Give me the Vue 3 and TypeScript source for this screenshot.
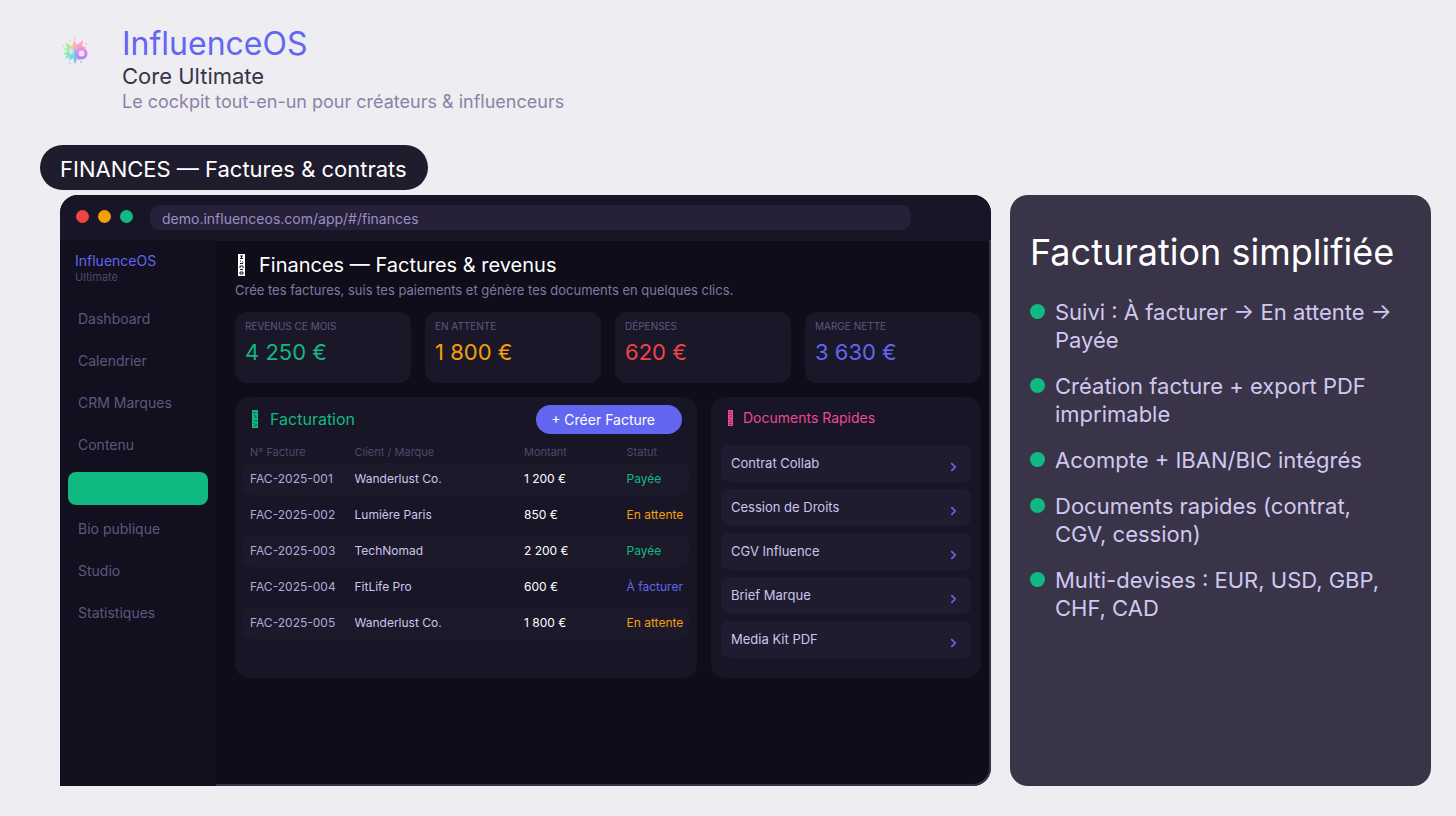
<script setup lang="ts">
interface Stat { label: string; value: string; tone: string }
interface Invoice { id: string; client: string; amount: string; status: string; tone: string }

const nav: string[] = ['Dashboard', 'Calendrier', 'CRM Marques', 'Contenu', 'Finances', 'Bio publique', 'Studio', 'Statistiques']
const active = 'Finances'

const stats: Stat[] = [
  { label: 'REVENUS CE MOIS', value: '4 250 €', tone: 'green' },
  { label: 'EN ATTENTE', value: '1 800 €', tone: 'amber' },
  { label: 'DÉPENSES', value: '620 €', tone: 'red' },
  { label: 'MARGE NETTE', value: '3 630 €', tone: 'indigo' },
]

const invoices: Invoice[] = [
  { id: 'FAC-2025-001', client: 'Wanderlust Co.', amount: '1 200 €', status: 'Payée', tone: 'green' },
  { id: 'FAC-2025-002', client: 'Lumière Paris', amount: '850 €', status: 'En attente', tone: 'amber' },
  { id: 'FAC-2025-003', client: 'TechNomad', amount: '2 200 €', status: 'Payée', tone: 'green' },
  { id: 'FAC-2025-004', client: 'FitLife Pro', amount: '600 €', status: 'À facturer', tone: 'indigo' },
  { id: 'FAC-2025-005', client: 'Wanderlust Co.', amount: '1 800 €', status: 'En attente', tone: 'amber' },
]

const documents: string[] = ['Contrat Collab', 'Cession de Droits', 'CGV Influence', 'Brief Marque', 'Media Kit PDF']

const features: string[] = [
  'Suivi : À facturer → En attente → Payée',
  'Création facture + export PDF imprimable',
  'Acompte + IBAN/BIC intégrés',
  'Documents rapides (contrat, CGV, cession)',
  'Multi-devises : EUR, USD, GBP, CHF, CAD',
]
</script>

<template>
  <div class="page">
    <header class="brand">
      <svg class="logo" viewBox="0 0 28 28" aria-hidden="true">
        <defs>
          <linearGradient id="petals" gradientUnits="userSpaceOnUse" x1="3" y1="4" x2="16" y2="26">
            <stop offset="0" stop-color="#e3f07f" />
            <stop offset="0.3" stop-color="#96f59a" />
            <stop offset="0.6" stop-color="#7be8cf" />
            <stop offset="1" stop-color="#8f9ff7" />
          </linearGradient>
          <linearGradient id="blush" x1="0" y1="0" x2="1" y2="0">
            <stop offset="0" stop-color="#f7c9a0" />
            <stop offset="0.5" stop-color="#fba3bd" />
            <stop offset="1" stop-color="#f39be6" />
          </linearGradient>
          <linearGradient id="ring" x1="0" y1="0" x2="0" y2="1">
            <stop offset="0" stop-color="#f08be6" />
            <stop offset="1" stop-color="#b184f8" />
          </linearGradient>
        </defs>
        <path fill="url(#petals)" d="M12 11 L9 8 L4 5 L6 11 L2 12 L7 14 L2 17 L6 18 L4 22 L9 20 L8 24 L12 21 L14 27 L16 22 L19 23 L17 19 L13 18 Z" />
        <path fill="url(#blush)" d="M9 12 L12 7 L13 3 L16 8 L22 3 L21 9 L26 11 L20 12 L14 14 Z" />
        <path fill="#eedff5" d="M9 11 L12 13 L11 17 L8 16 Z" />
        <path fill="#63cff5" d="M13 12 H15 V22 H13 Z" />
        <circle cx="20.500" cy="16.500" r="4.500" fill="#f1e4f7" stroke="url(#ring)" stroke-width="3" />
        <circle cx="14" cy="1.500" r="1" fill="#f5b9c9" />
        <circle cx="9" cy="4" r="1" fill="#f0dc92" />
        <circle cx="2" cy="9" r="1" fill="#cdee8b" />
        <circle cx="9" cy="26" r="1" fill="#9ae3e6" />
        <circle cx="20" cy="25" r="1" fill="#b7b2f5" />
        <circle cx="25" cy="7" r="1" fill="#f3aee0" />
      </svg>
      <div>
        <h1 class="brand-name">InfluenceOS</h1>
        <p class="brand-edition">Core Ultimate</p>
        <p class="brand-tagline">Le cockpit tout-en-un pour créateurs &amp; influenceurs</p>
      </div>
    </header>

    <div class="pill">FINANCES — Factures &amp; contrats</div>

    <div class="board">
      <section class="window" aria-label="Application">
        <div class="chrome">
          <span class="dot dot-red"></span>
          <span class="dot dot-amber"></span>
          <span class="dot dot-green"></span>
          <input class="url" type="text" aria-label="Adresse" value="demo.influenceos.com/app/#/finances" readonly />
        </div>
        <div class="body">
          <aside class="sidebar">
            <div class="side-name">InfluenceOS</div>
            <div class="side-edition">Ultimate</div>
            <nav class="nav">
              <a v-for="item in nav" :key="item" href="#" class="nav-item" :class="{ active: item === active }" :aria-label="item">
                <template v-if="item !== active">{{ item }}</template>
              </a>
            </nav>
          </aside>

          <main class="main">
            <h2 class="title">
              <svg class="glyph glyph-lg" viewBox="0 0 7 22" aria-hidden="true">
                <path fill="currentColor" d="M0 0H7V22H0Z" />
                <path class="glyph-ink" d="M2 2H5M3.500 2V4M2 4.500H5M2 7H3M4 8H5M2 9.500H5M2 12H5M2 12V14M5 12V14M2 15.500H5M2 18H5V20H2Z" />
              </svg>
              Finances — Factures &amp; revenus
            </h2>
            <p class="subtitle">Crée tes factures, suis tes paiements et génère tes documents en quelques clics.</p>

            <div class="stats">
              <div v-for="s in stats" :key="s.label" class="stat">
                <div class="stat-label">{{ s.label }}</div>
                <div class="stat-value" :class="s.tone">{{ s.value }}</div>
              </div>
            </div>

            <div class="panels">
              <section class="panel">
                <div class="billing-head">
                  <h3 class="billing-title green">
                    <svg class="glyph glyph-md" viewBox="0 0 6 18" aria-hidden="true">
                      <path fill="currentColor" d="M0 0H6V18H0Z" />
                      <path class="glyph-ink thin" d="M2 2V4M4 2V3M2 6H4M4 7V8M2 10V11M4 10V12M2 13V14M4 14V16M2 16H3" />
                    </svg>
                    Facturation
                  </h3>
                  <button class="create" type="button">+ Créer Facture</button>
                </div>
                <table class="table">
                  <colgroup><col class="c-id" /><col class="c-client" /><col class="c-amount" /><col class="c-status" /></colgroup>
                  <thead>
                    <tr><th>N° Facture</th><th>Client / Marque</th><th>Montant</th><th>Statut</th></tr>
                  </thead>
                  <tbody>
                    <tr v-for="r in invoices" :key="r.id">
                      <td class="lilac">{{ r.id }}</td>
                      <td class="pale">{{ r.client }}</td>
                      <td class="white">{{ r.amount }}</td>
                      <td :class="r.tone">{{ r.status }}</td>
                    </tr>
                  </tbody>
                </table>
              </section>

              <section class="panel docs">
                <h3 class="docs-title">
                  <svg class="glyph glyph-sm" viewBox="0 0 5 16" aria-hidden="true">
                    <path fill="currentColor" d="M0 0H5V16H0Z" />
                    <path class="glyph-ink thin" d="M1.500 2H3.500M1.500 4V5M3.500 4V5M1.500 7H3.500M1.500 9V10M3.500 10V11M1.500 12.500H3.500M1.500 14.500H3.500" />
                  </svg>
                  Documents Rapides
                </h3>
                <button v-for="d in documents" :key="d" class="doc" type="button">
                  <span>{{ d }}</span>
                  <svg class="chevron" viewBox="0 0 6 9" aria-hidden="true"><path d="M1 1L4.500 4.500L1 8" /></svg>
                </button>
              </section>
            </div>
          </main>
        </div>
      </section>

      <aside class="pitch">
        <h2 class="pitch-title">Facturation simplifiée</h2>
        <ul class="features">
          <li v-for="f in features" :key="f">{{ f }}</li>
        </ul>
      </aside>
    </div>
  </div>
</template>

<style>
body { margin: 0; background: #eeedf2; }
</style>

<style scoped>
* { box-sizing: border-box; }
h1, h2, h3, p, ul { margin: 0; padding: 0; font-weight: 400; }
.page {
  min-height: 100vh;
  display: flex;
  flex-direction: column;
  padding: 24px 25px 30px 40px;
  background: #eeedf2;
  font-family: Inter, "Liberation Sans", sans-serif;
}
.brand { display: flex; gap: 33px; padding-left: 21px; }
.logo { width: 28px; height: 28px; margin-top: 13px; flex: none; }
.brand-name { font-size: 32px; line-height: 40px; color: #6366f1; }
.brand-edition { font-size: 22px; line-height: 24px; color: #393447; }
.brand-tagline { font-size: 18px; line-height: 28px; color: #8c82a6; }
.pill {
  align-self: flex-start;
  margin-top: 29px;
  padding: 4px 21px 0 20px;
  border-radius: 23px;
  background: #1f1c2d;
  color: #fff;
  font-size: 22px;
  line-height: 41px;
}
.board {
  flex: 1;
  display: grid;
  grid-template-columns: 931fr 421fr;
  gap: 19px;
  margin: 5px 0 0 20px;
}
.window {
  display: flex;
  flex-direction: column;
  overflow: hidden;
  border-radius: 18px 18px 18px 0;
  background: #0f0d19;
}
.chrome {
  display: flex;
  align-items: center;
  gap: 9px;
  height: 45px;
  padding: 0 80px 2px 16px;
  background: #181526;
}
.dot { width: 13px; height: 13px; border-radius: 50%; flex: none; }
.dot-red { background: #ef4444; }
.dot-amber { background: #f59e0b; }
.dot-green { background: #10b981; }
.url {
  flex: 1;
  min-width: 0;
  height: 25px;
  margin: 2px 0 0 8px;
  padding: 2px 12px 0;
  border: 0;
  border-radius: 10px;
  outline: 0;
  background: #262138;
  color: #9b8fc4;
  font: 14px/20px Inter, "Liberation Sans", sans-serif;
}
.body { flex: 1; display: flex; }
.sidebar { width: 156px; flex: none; padding: 12px 8px; background: #120f1e; }
.side-name { padding-left: 7px; font-size: 14px; line-height: 18px; color: #6366f1; }
.side-edition { padding-left: 7px; font-size: 11px; line-height: 14px; color: #4f496b; }
.nav { display: flex; flex-direction: column; gap: 9px; margin-top: 20px; }
.nav-item {
  height: 33px;
  padding-left: 10px;
  border-radius: 8px;
  color: #5f587e;
  font-size: 14px;
  line-height: 29px;
  text-decoration: none;
}
.nav-item.active { background: #10b981; }
.main {
  flex: 1;
  min-width: 0;
  padding: 10px 8px 20px 19px;
  border: solid #37324a;
  border-width: 0 2px 2px 0;
  border-bottom-right-radius: 18px;
  box-shadow: inset 0 1px #181526;
}
.title { display: flex; align-items: center; gap: 14px; padding: 1px 0 0 3px; font-size: 20px; line-height: 28px; color: #fff; }
.glyph { flex: none; }
.glyph-lg { width: 7px; height: 22px; }
.glyph-md { width: 6px; height: 18px; }
.glyph-sm { width: 5px; height: 16px; }
.glyph-ink { fill: none; stroke: #181526; stroke-width: 1; }
.glyph-ink.thin { stroke-opacity: 0.7; }
.subtitle { font-size: 13px; line-height: 22px; color: #8077a3; }
.stats { display: grid; grid-template-columns: repeat(4, 1fr); gap: 14px; margin-top: 11px; }
.stat { height: 71px; padding: 7px 10px; border-radius: 12px; background: #1a1729; }
.stat-label { font-size: 10px; line-height: 14px; color: #5f587e; }
.stat-value { margin-top: 5px; font-size: 22px; line-height: 28px; }
.green { color: #10b981; }
.amber { color: #f59e0b; }
.red { color: #ef4444; }
.indigo { color: #6366f1; }
.lilac { color: #b3a8dc; }
.pale { color: #cdc4ec; }
.white { color: #fff; }
.panels { display: grid; grid-template-columns: 462fr 270fr; gap: 14px; margin-top: 14px; }
.panel { padding: 8px 8px 35px; border-radius: 14px; background: #181526; }
.billing-head { display: flex; justify-content: space-between; align-items: flex-start; padding: 0 7px 0 9px; }
.billing-title { display: flex; align-items: center; gap: 12px; font-size: 16px; line-height: 28px; }
.create {
  height: 29px;
  padding: 1px 27px 0 15px;
  border: 0;
  border-radius: 15px;
  background: #6366f1;
  color: #fff;
  font: 14px/20px Inter, "Liberation Sans", sans-serif;
}
.table { width: 100%; margin-top: 8px; table-layout: fixed; border-collapse: separate; border-spacing: 0 4px; }
.c-id { width: 25%; }
.c-client { width: 38%; }
.c-amount { width: 23%; }
.c-status { width: 14%; }
th { height: 13px; padding: 0 0 1px; text-align: left; font-size: 11px; line-height: 12px; font-weight: 400; color: #4f496b; white-space: nowrap; }
td { height: 32px; padding: 0; font-size: 12px; line-height: 16px; white-space: nowrap; }
th:first-child, td:first-child { padding-left: 7px; }
tbody tr:nth-child(odd) td { background: #1c192a; }
td:first-child { border-radius: 8px 0 0 8px; }
td:last-child { border-radius: 0 8px 8px 0; }
.docs { display: flex; flex-direction: column; gap: 7px; padding: 8px 10px 20px; }
.docs-title { display: flex; align-items: center; gap: 10px; margin-bottom: 8px; padding: 0 7px; font-size: 14px; line-height: 25px; color: #ec4899; }
.doc {
  display: flex;
  justify-content: space-between;
  align-items: center;
  height: 37px;
  padding: 0 14px 1px 10px;
  border: 0;
  border-radius: 8px;
  background: #1f1c2f;
  color: #cdc4ec;
  font: 13px/18px Inter, "Liberation Sans", sans-serif;
}
.chevron { width: 7px; height: 10px; margin-top: 7px; fill: none; stroke: #6366f1; stroke-width: 1.5; }
.pitch { padding: 33px 20px; border-radius: 18px; background: #393447; }
.pitch-title { font-size: 36px; line-height: 48px; color: #fff; }
.features { display: flex; flex-direction: column; gap: 18px; margin-top: 22px; padding-right: 16px; list-style: none; }
.features li { display: flex; gap: 10px; font-size: 22px; line-height: 28px; color: #d0c8f0; }
.features li::before { content: ""; flex: none; width: 15px; height: 15px; margin-top: 6px; border-radius: 50%; background: #10b981; }
</style>
